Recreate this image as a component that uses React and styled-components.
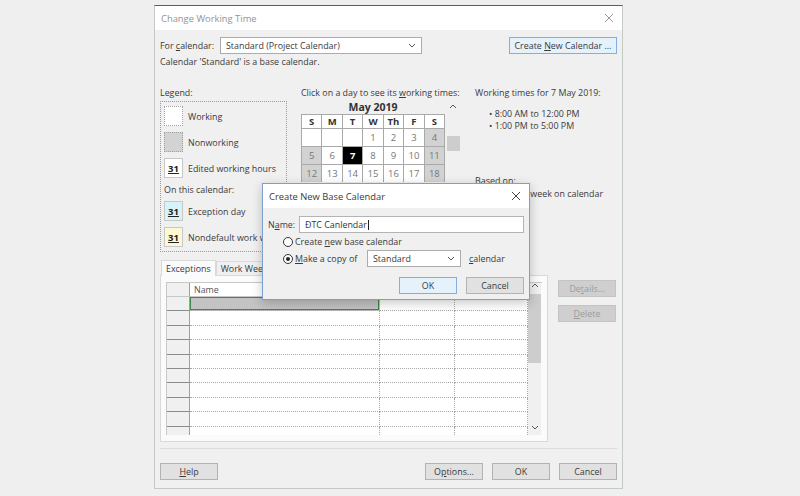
import styled, { createGlobalStyle } from "styled-components";

const GlobalStyle = createGlobalStyle`
  body {
    margin: 0;
    background: #efefef;
    font-family: "Open Sans", "Noto Sans", sans-serif;
  }
`;

const Page = styled.div`
  width: 800px;
  height: 496px;
  padding: 5px 0 0 154px;
  box-sizing: border-box;
  overflow: hidden;
`;

const Window = styled.div`
  position: relative;
  width: 469px;
  height: 484px;
  box-sizing: border-box;
  background: #f0f0f0;
  border: 1px solid #c4cac4;
  border-top-color: #3f6f45;
  display: flex;
  flex-direction: column;
  font-size: 8.9px;
  color: #3a3a3a;
`;

const TitleBar = styled.div`
  height: 24px;
  flex-shrink: 0;
  background: #fff;
  display: flex;
  align-items: center;
  justify-content: space-between;
  padding: 0 8px 0 6px;
  color: ${(p) => (p.$dim ? "#949494" : "#3a3a3a")};
  font-size: 9.4px;
`;

const Body = styled.div`
  padding: 7px 5px 0 5px;
  display: flex;
  flex-direction: column;
`;

const Row = styled.div`
  display: flex;
  align-items: center;
`;

const FieldLabel = styled.span`
  width: ${(p) => p.$w}px;
  flex-shrink: 0;
  white-space: nowrap;
`;

const Select = styled.div`
  width: ${(p) => p.$w}px;
  height: 17px;
  box-sizing: border-box;
  background: #fff;
  border: 1px solid #acacac;
  display: flex;
  align-items: center;
  justify-content: space-between;
  padding: 0 5px;
`;

const Button = styled.div`
  width: ${(p) => (p.$w ? p.$w + "px" : "58px")};
  height: 17px;
  box-sizing: border-box;
  line-height: 15px;
  text-align: center;
  white-space: nowrap;
  background: ${(p) => (p.$primary ? "#e5f1fb" : p.$disabled ? "#cfcfcf" : "#e1e1e1")};
  border: 1px solid ${(p) => (p.$primary ? "#7fb0e2" : p.$disabled ? "#c4c4c4" : "#b3b3b3")};
  color: ${(p) => (p.$disabled ? "#9c9c9c" : "#3a3a3a")};
  margin-left: ${(p) => (p.$auto ? "auto" : "0")};
`;

const InfoLine = styled.div`
  margin-top: 2px;
  line-height: 12px;
`;

const Main = styled.div`
  margin-top: 19px;
  display: flex;
`;

const Column = styled.div`
  width: ${(p) => (p.$w ? p.$w + "px" : "auto")};
  flex: ${(p) => (p.$w ? "none" : "1")};
  margin-left: ${(p) => p.$ml || 0}px;
  display: flex;
  flex-direction: column;
`;

const Caption = styled.div`
  line-height: 12px;
  white-space: nowrap;
`;

const LegendBox = styled.div`
  margin-top: 2px;
  height: 151px;
  box-sizing: border-box;
  border: 1px dotted #9a9a9a;
  padding: 4px 3px;
  display: flex;
  flex-direction: column;
  gap: 6px;
`;

const LegendItem = styled.div`
  display: flex;
  align-items: center;
  gap: 5px;
  height: 20px;
  white-space: nowrap;
`;

const Swatch = styled.div`
  width: 19px;
  height: 20px;
  box-sizing: border-box;
  flex-shrink: 0;
  background: ${(p) => p.$bg};
  border: 1px ${(p) => (p.$dotted ? "dotted #a0a0a0" : "solid #c8c8c8")};
  display: flex;
  align-items: center;
  justify-content: center;
  font-weight: bold;
  font-size: 9.5px;
  color: #222;
  text-decoration: underline;
`;

const SubCaption = styled.div`
  line-height: 11px;
`;

const MonthRow = styled.div`
  display: flex;
  height: 15px;
  align-items: center;
`;

const MonthTitle = styled.div`
  width: 145px;
  text-align: center;
  font-weight: bold;
  font-size: 10.5px;
  color: #333;
`;

const ScrollCol = styled.div`
  width: 14px;
  display: flex;
  flex-direction: column;
  align-items: center;
  padding-left: 1px;
`;

const CalBody = styled.div`
  display: flex;
`;

const CalGrid = styled.div`
  width: 145px;
  box-sizing: border-box;
  display: grid;
  grid-template-columns: repeat(7, 1fr);
  grid-template-rows: 13px;
  grid-auto-rows: 17px;
  gap: 1px;
  padding: 1px 1px 0 1px;
  background: #a9a9a9;
`;

const DayHead = styled.div`
  background: #fff;
  display: flex;
  align-items: center;
  justify-content: center;
  font-weight: bold;
  font-size: 9.5px;
  color: #333;
`;

const Day = styled.div`
  background: ${(p) => (p.$sel ? "#000" : p.$weekend ? "#d2d2d2" : "#fff")};
  color: ${(p) => (p.$sel ? "#fff" : "#777")};
  font-weight: ${(p) => (p.$sel ? "bold" : "normal")};
  font-size: 9.5px;
  display: flex;
  align-items: center;
  justify-content: center;
`;

const Thumb = styled.div`
  margin-top: ${(p) => p.$top}px;
  width: 13px;
  height: ${(p) => p.$h}px;
  background: #cdcdcd;
  flex-shrink: 0;
`;

const Bullets = styled.div`
  margin-top: 9px;
  padding-left: 14px;
  line-height: 12px;
`;

const BasedOn = styled.div`
  margin-top: 42px;
  line-height: 13px;
  white-space: nowrap;
`;

const Lower = styled.div`
  margin-top: 7px;
  display: flex;
`;

const TabArea = styled.div`
  width: 388px;
  display: flex;
  flex-direction: column;
`;

const TabStrip = styled.div`
  display: flex;
  align-items: flex-end;
  height: 16px;
  padding-left: 1px;
`;

const Tab = styled.div`
  height: ${(p) => (p.$active ? 16 : 14)}px;
  box-sizing: border-box;
  padding: 0 4px;
  display: flex;
  align-items: center;
  background: ${(p) => (p.$active ? "#fbfbfb" : "#f0f0f0")};
  border: 1px solid #d9d9d9;
  border-bottom: none;
  margin-bottom: ${(p) => (p.$active ? -1 : 0)}px;
  position: relative;
  z-index: ${(p) => (p.$active ? 1 : 0)};
  white-space: nowrap;
`;

const TabPanel = styled.div`
  height: 167px;
  box-sizing: border-box;
  background: #fbfbfb;
  border: 1px solid #d9d9d9;
  padding: 6px 5px;
`;

const Table = styled.div`
  display: flex;
  height: 152px;
  overflow: hidden;
  border-top: 1px solid #c8c8c8;
  border-left: 1px solid #c8c8c8;
`;

const TableGrid = styled.div`
  display: grid;
  grid-template-columns: 23px 190px 75px 73px;
  grid-template-rows: 14px;
  grid-auto-rows: 14.4px;
  align-content: start;
`;

const RowHead = styled.div`
  background: #f0f0f0;
  border-bottom: 1px solid ${(p) => (p.$head ? "#c8c8c8" : "#8c8c8c")};
  border-right: 1px solid #a0a0a0;
`;

const HeadCell = styled.div`
  background: #fff;
  border-bottom: 1px solid #c8c8c8;
  border-right: 1px solid #d0d0d0;
  padding-left: 4px;
  display: flex;
  align-items: center;
  color: #555;
`;

const Cell = styled.div`
  background: ${(p) => (p.$sel ? "#c3c3c3" : "#fff")};
  border-bottom: 1px dotted #a8a8a8;
  border-right: 1px dotted #a8a8a8;
  box-shadow: ${(p) => (p.$sel ? "inset 0 0 0 1px #3f8b43" : "none")};
`;

const TableScroll = styled.div`
  width: 13px;
  padding-bottom: 5px;
  box-sizing: border-box;
  background: #f0f0f0;
  display: flex;
  flex-direction: column;
  align-items: center;
`;

const ScrollSpacer = styled.div`
  flex: 1;
`;

const SideButtons = styled.div`
  margin-left: 10px;
  padding-top: 21px;
  display: flex;
  flex-direction: column;
  gap: 8px;
`;

const Separator = styled.div`
  margin-top: 6px;
  height: 1px;
  background: #dcdcdc;
`;

const Footer = styled.div`
  margin-top: 14px;
  display: flex;
  gap: 9px;
`;

const Modal = styled.div`
  position: absolute;
  left: 107px;
  top: 177px;
  width: 268px;
  height: 117px;
  box-sizing: border-box;
  background: #f0f0f0;
  border: 1px solid #7c9fcf;
  box-shadow: 0 3px 10px rgba(0, 0, 0, 0.22);
  display: flex;
  flex-direction: column;
  z-index: 2;
`;

const ModalBody = styled.div`
  padding: 8px 5px 0 5px;
  display: flex;
  flex-direction: column;
`;

const Input = styled.div`
  flex: 1;
  height: 17px;
  box-sizing: border-box;
  background: #fff;
  border: 1px solid #b4b4b4;
  display: flex;
  align-items: center;
  padding-left: 5px;
  color: #333;
`;

const Cursor = styled.span`
  display: inline-block;
  width: 1px;
  height: 10px;
  background: #222;
  margin-left: 1px;
`;

const RadioRow = styled.div`
  display: flex;
  align-items: center;
  height: ${(p) => p.$h}px;
  margin-top: ${(p) => p.$mt}px;
  padding-left: 15px;
  white-space: nowrap;
`;

const Radio = styled.span`
  width: 10px;
  height: 10px;
  box-sizing: border-box;
  border-radius: 50%;
  border: 1px solid #333;
  background: #fff;
  margin-right: 2px;
  display: flex;
  align-items: center;
  justify-content: center;
  flex-shrink: 0;
  &::after {
    content: "";
    width: 4px;
    height: 4px;
    border-radius: 50%;
    background: ${(p) => (p.$on ? "#222" : "transparent")};
  }
`;

const TrailLabel = styled.span`
  margin-left: 8px;
`;

const ModalButtons = styled.div`
  margin-top: 10px;
  display: flex;
  justify-content: flex-end;
  gap: 9px;
`;

const Close = ({ color = "#8a8a8a", size = 10 }) => (
  <svg width={size} height={size} viewBox="0 0 10 10">
    <path d="M1 1L9 9M9 1L1 9" stroke={color} strokeWidth="1" />
  </svg>
);

const Chevron = ({ up }) => (
  <svg width="8" height="5" viewBox="0 0 8 5">
    <path
      d={up ? "M1 4L4 1L7 4" : "M1 1L4 4L7 1"}
      stroke="#555"
      strokeWidth="1"
      fill="none"
    />
  </svg>
);

// rows below the 18th are hidden by the dialog in front
const days = [
  ["", "", "", "1", "2", "3", "4"],
  ["5", "6", "7", "8", "9", "10", "11"],
  ["12", "13", "14", "15", "16", "17", "18"],
];

const heads = ["S", "M", "T", "W", "Th", "F", "S"];

export default function App() {
  const rows = Array.from({ length: 10 });
  return (
    <Page>
      <GlobalStyle />
      <Window>
        <TitleBar $dim>
          <span>Change Working Time</span>
          <Close color="#9a9a9a" />
        </TitleBar>
        <Body>
          <Row>
            <FieldLabel $w={60}>
              For <u>c</u>alendar:
            </FieldLabel>
            <Select $w={202}>
              <span>Standard (Project Calendar)</span>
              <Chevron />
            </Select>
            <Button $primary $auto $w={108}>
              Create <u>N</u>ew Calendar ...
            </Button>
          </Row>
          <InfoLine>Calendar 'Standard' is a base calendar.</InfoLine>
          <Main>
            <Column $w={127}>
              <Caption>Legend:</Caption>
              <LegendBox>
                <LegendItem>
                  <Swatch $bg="#fff" $dotted />
                  Working
                </LegendItem>
                <LegendItem>
                  <Swatch $bg="#d3d3d3" $dotted />
                  Nonworking
                </LegendItem>
                <LegendItem>
                  <Swatch $bg="#fff">31</Swatch>
                  Edited working hours
                </LegendItem>
                <SubCaption>On this calendar:</SubCaption>
                <LegendItem>
                  <Swatch $bg="#d6f4f8">31</Swatch>
                  Exception day
                </LegendItem>
                <LegendItem>
                  <Swatch $bg="#fcf8d2">31</Swatch>
                  Nondefault work week
                </LegendItem>
              </LegendBox>
            </Column>
            <Column $w={159} $ml={14}>
              <Caption>
                Click on a day to see its <u>w</u>orking times:
              </Caption>
              <MonthRow>
                <MonthTitle>May 2019</MonthTitle>
                <ScrollCol>
                  <Chevron up />
                </ScrollCol>
              </MonthRow>
              <CalBody>
                <CalGrid>
                  {heads.map((h, i) => (
                    <DayHead key={"h" + i}>{h}</DayHead>
                  ))}
                  {days.map((week, w) =>
                    week.map((d, i) => (
                      <Day
                        key={w + "-" + i}
                        $weekend={d !== "" && (i === 0 || i === 6)}
                        $sel={d === "7"}
                      >
                        {d}
                      </Day>
                    ))
                  )}
                </CalGrid>
                <ScrollCol>
                  <Thumb $top={22} $h={15} />
                </ScrollCol>
              </CalBody>
            </Column>
            <Column $ml={15}>
              <Caption>Working times for 7 May 2019:</Caption>
              <Bullets>
                <div>• 8:00 AM to 12:00 PM</div>
                <div>• 1:00 PM to 5:00 PM</div>
              </Bullets>
              <BasedOn>
                <div>Based on:</div>
                <div>Default work week on calendar</div>
                <div>'Standard'.</div>
              </BasedOn>
            </Column>
          </Main>
          <Lower>
            <TabArea>
              <TabStrip>
                <Tab $active>Exceptions</Tab>
                <Tab>Work Weeks</Tab>
              </TabStrip>
              <TabPanel>
                <Table>
                  <TableGrid>
                    <RowHead $head />
                    <HeadCell>Name</HeadCell>
                    <HeadCell>Start</HeadCell>
                    <HeadCell>Finish</HeadCell>
                    {rows.map((_, r) => [
                      <RowHead key={"rh" + r} />,
                      <Cell key={"n" + r} $sel={r === 0} />,
                      <Cell key={"s" + r} />,
                      <Cell key={"f" + r} />,
                    ])}
                  </TableGrid>
                  <TableScroll>
                    <Chevron up />
                    <Thumb $top={6} $h={69} />
                    <ScrollSpacer />
                    <Chevron />
                  </TableScroll>
                </Table>
              </TabPanel>
            </TabArea>
            <SideButtons>
              <Button $disabled>
                De<u>t</u>ails...
              </Button>
              <Button $disabled>
                <u>D</u>elete
              </Button>
            </SideButtons>
          </Lower>
          <Separator />
          <Footer>
            <Button>
              <u>H</u>elp
            </Button>
            <Button $auto>
              O<u>p</u>tions...
            </Button>
            <Button>OK</Button>
            <Button>Cancel</Button>
          </Footer>
        </Body>

        <Modal>
          <TitleBar>
            <span>Create New Base Calendar</span>
            <Close color="#444" />
          </TitleBar>
          <ModalBody>
            <Row>
              <FieldLabel $w={31}>
                N<u>a</u>me:
              </FieldLabel>
              <Input>
                ĐTC Canlendar
                <Cursor />
              </Input>
            </Row>
            <RadioRow $h={13} $mt={2}>
              <Radio />
              <span>
                Create <u>n</u>ew base calendar
              </span>
            </RadioRow>
            <RadioRow $h={17} $mt={2}>
              <Radio $on />
              <FieldLabel $w={72}>
                <u>M</u>ake a copy of
              </FieldLabel>
              <Select $w={94}>
                <span>Standard</span>
                <Chevron />
              </Select>
              <TrailLabel>
                <u>c</u>alendar
              </TrailLabel>
            </RadioRow>
            <ModalButtons>
              <Button $primary>OK</Button>
              <Button>Cancel</Button>
            </ModalButtons>
          </ModalBody>
        </Modal>
      </Window>
    </Page>
  );
}
